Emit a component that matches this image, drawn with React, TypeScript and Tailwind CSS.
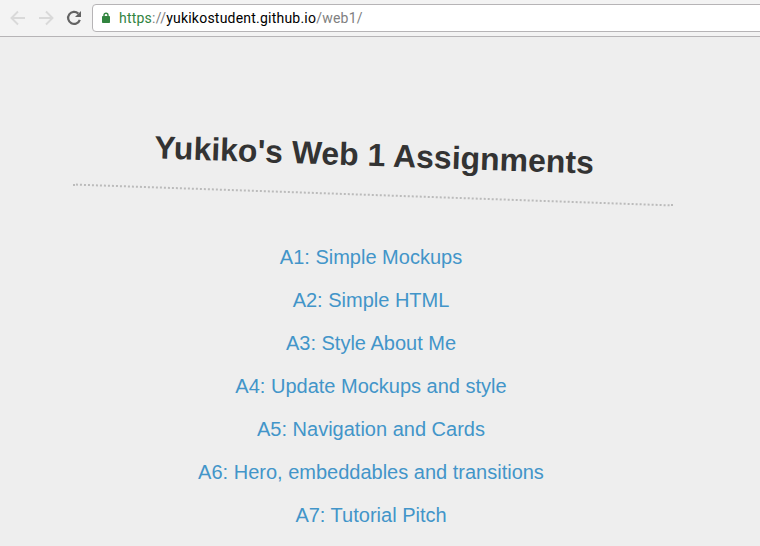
const items: string[] = [
  "A1: Simple Mockups",
  "A2: Simple HTML",
  "A3: Style About Me",
  "A4: Update Mockups and style",
  "A5: Navigation and Cards",
  "A6: Hero, embeddables and transitions",
  "A7: Tutorial Pitch",
];

export default function App() {
  return (
    <div className="flex h-[546px] w-[760px] flex-col overflow-hidden bg-[#eeeeee] font-['Liberation_Sans',Arial,sans-serif]">
      <header className="flex h-[37px] shrink-0 items-start border-b border-[#b6b4b6] bg-[#f3f3f3]">
        <svg className="h-9 w-[92px] shrink-0" viewBox="0 0 92 36" fill="none" strokeWidth="1.9">
          <path d="M25 18H12M18 11.5L11.5 18L18 24.5" stroke="#d9d9d9" />
          <path d="M39 18H52M46 11.5L52.5 18L46 24.5" stroke="#d9d9d9" />
          <path d="M78.3 13.6A6 6 0 1 0 79.8 19.8" stroke="#636363" strokeWidth="2.2" />
          <path d="M81 11V17H75Z" fill="#636363" />
        </svg>
        <div className="mt-1 flex h-7 w-[700px] shrink-0 items-center rounded-[4px] border border-[#b6b4b6] bg-white pl-[9px]">
          <svg className="h-3 w-2 shrink-0" viewBox="0 0 8 12">
            <path d="M2 6V3.2a2 2 0 0 1 4 0V6" fill="none" stroke="#31843f" strokeWidth="1.4" />
            <rect y="4" width="8" height="7" rx="0.8" fill="#31843f" />
          </svg>
          <p className="ml-[9px] whitespace-nowrap font-[Roboto,sans-serif] text-[14px] leading-5 tracking-[0.22px] text-[#808080]">
            <span className="text-[#31843f]">https</span>://<span className="text-black">yukikostudent.github.io</span>/web1/
          </p>
        </div>
      </header>
      <main className="flex flex-col pl-[73px]">
        <h1 className="mt-[87px] ml-px h-[72px] w-[600px] rotate-2 border-b-2 border-dotted border-[#bbb] pt-[11px] text-center text-[32px] leading-10 font-bold text-[#333]">
          Yukiko's Web 1 Assignments
        </h1>
        <ul className="mt-[40px] w-[596px] text-center text-[20px] leading-[43px] text-[#4295c9]">
          {items.map((label) => (
            <li key={label}><a>{label}</a></li>
          ))}
        </ul>
      </main>
    </div>
  );
}
